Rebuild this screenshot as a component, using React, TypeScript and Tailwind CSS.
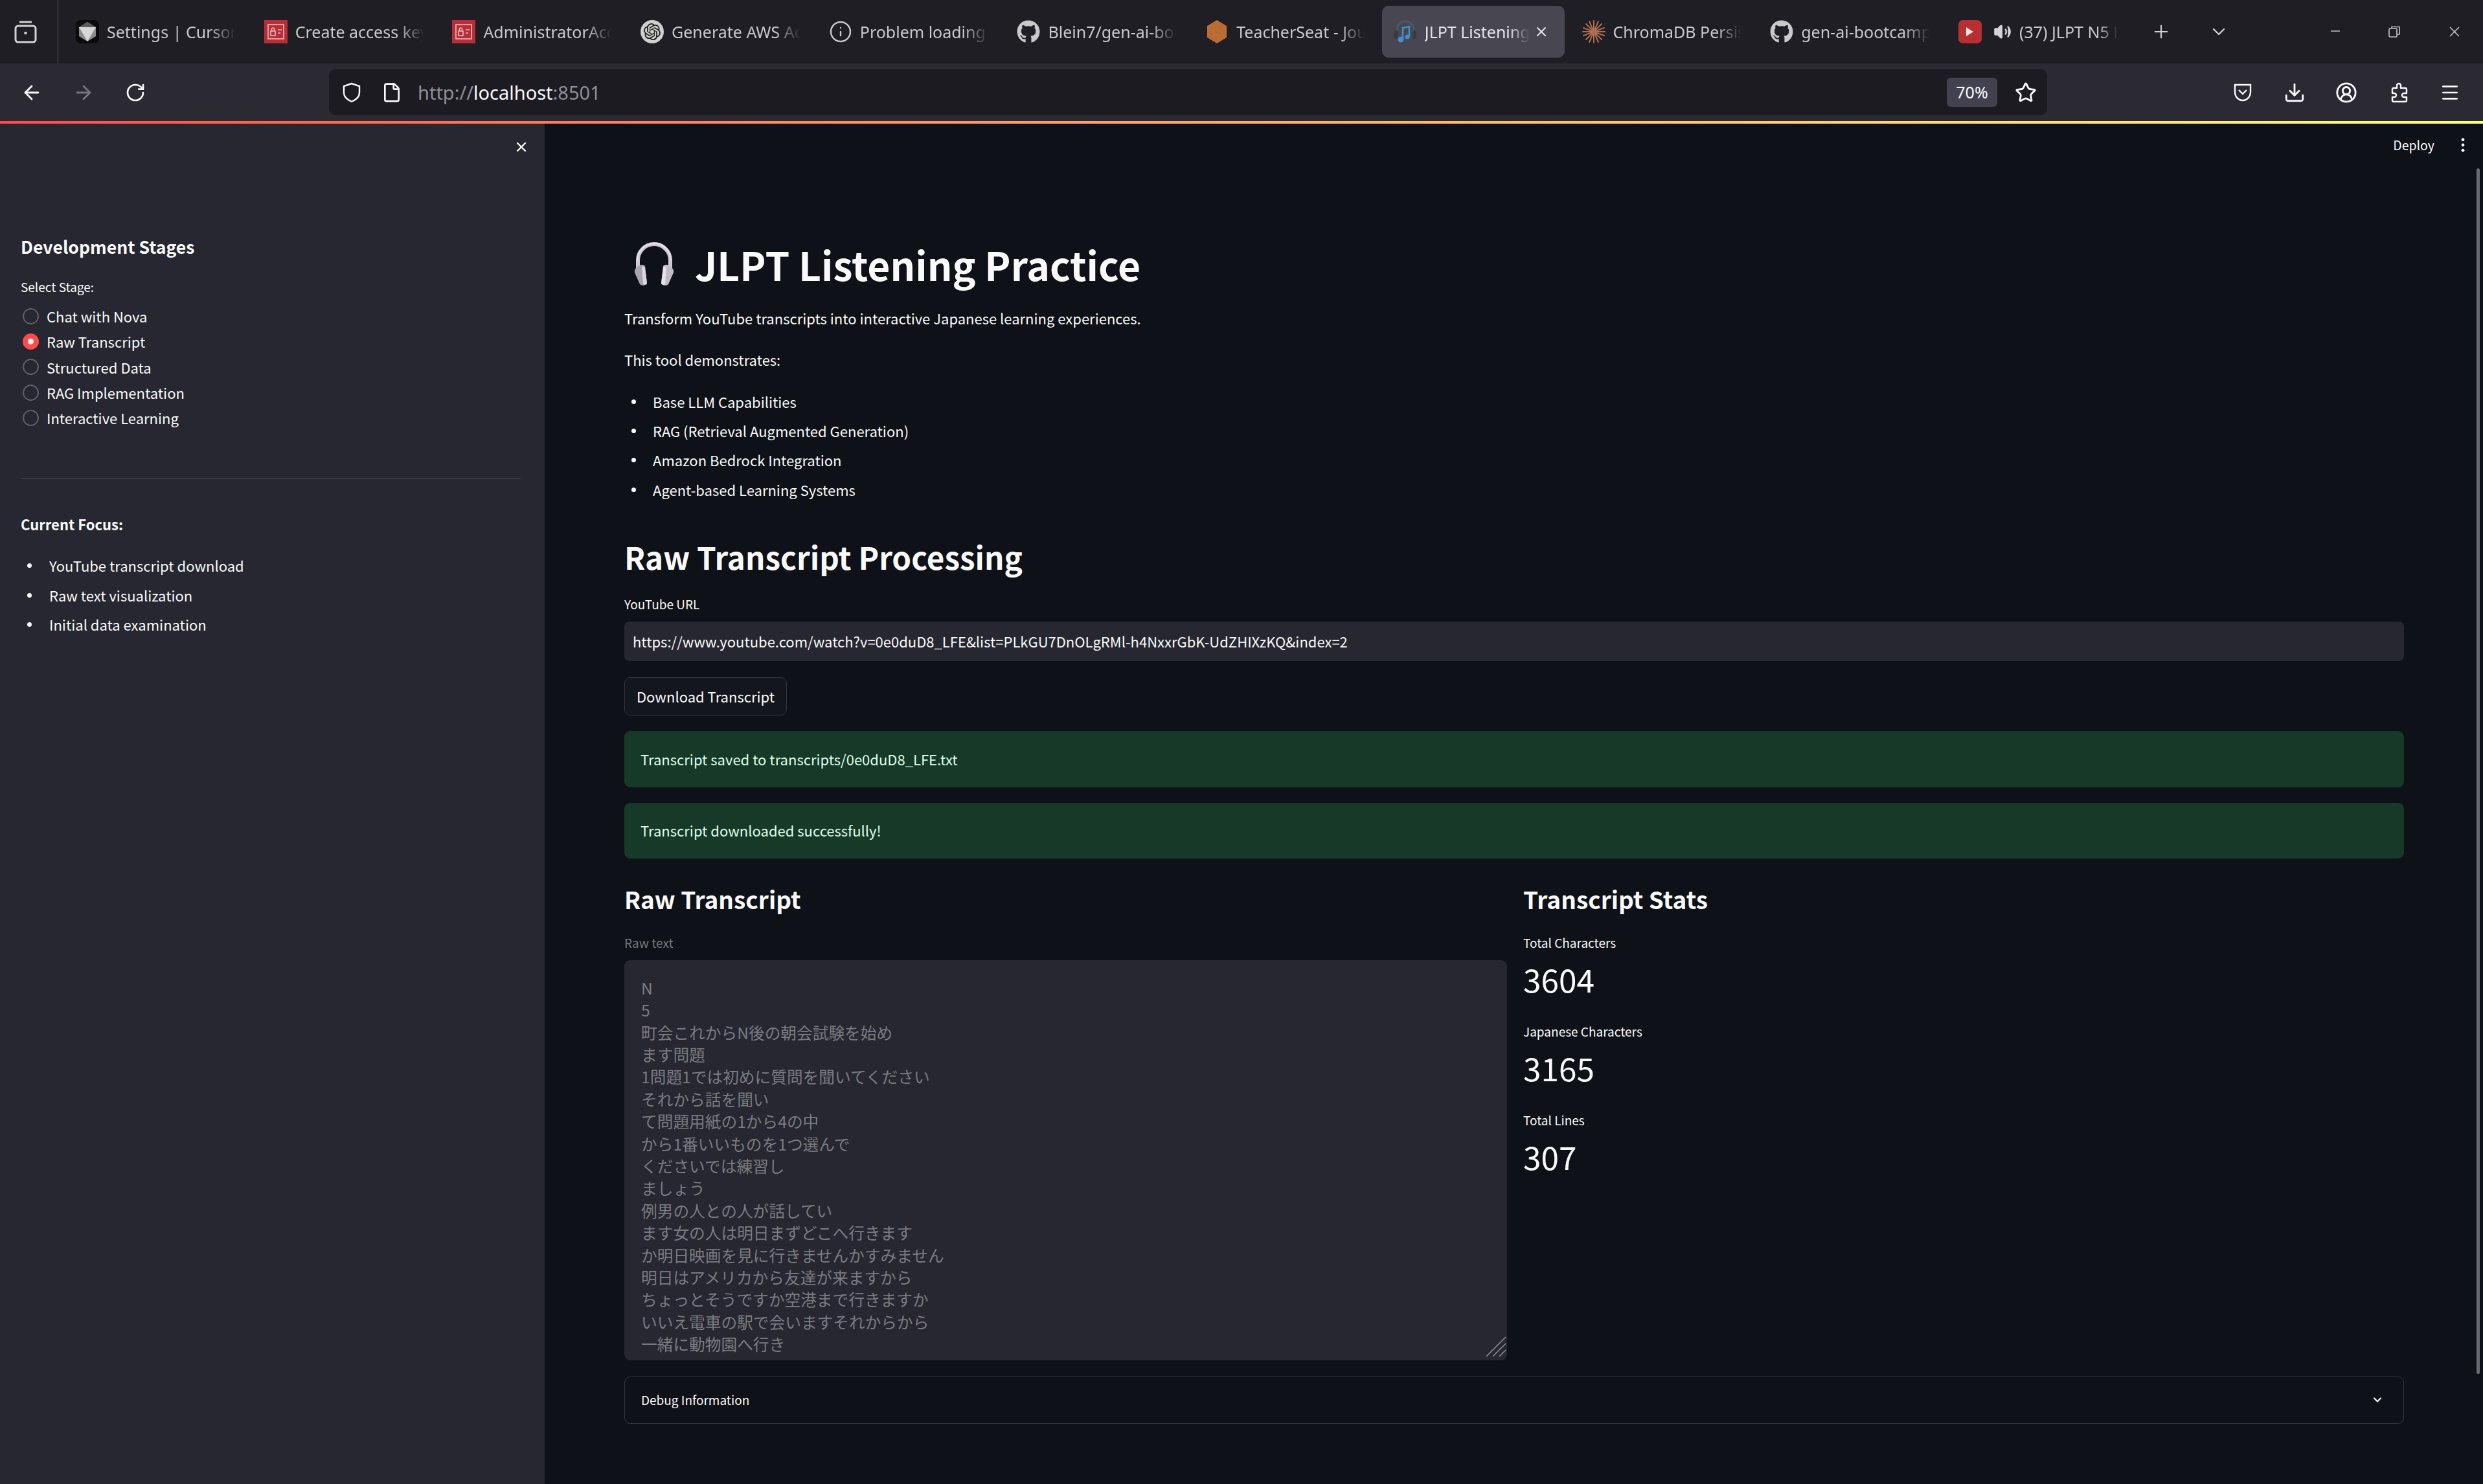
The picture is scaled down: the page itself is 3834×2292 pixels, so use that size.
import React from "react";
import { ArrowLeft, ArrowRight, ChevronDown, CircleUserRound, Download, File, Info, Menu, Minus, Plus, RotateCw, Star, Volume2, X } from "lucide-react";
import { FaGithub } from "react-icons/fa";
import { SiOpenai } from "react-icons/si";

const Iam = () => (
  <svg viewBox="0 0 36 36" className="w-[36px] h-[36px]">
    <rect width="36" height="36" fill="#b72e38" />
    <rect x="6" y="7" width="24" height="22" fill="none" stroke="#e8b9bc" strokeWidth="1.6" />
    <rect x="10" y="17" width="7" height="7" fill="none" stroke="#e8b9bc" strokeWidth="1.6" />
    <path d="M11.5 17v-3a2 2 0 0 1 4 0v3M21 15h6M21 20h4" fill="none" stroke="#e8b9bc" strokeWidth="1.6" />
  </svg>
);
const CursorIcon = () => (
  <svg viewBox="0 0 36 36" className="w-[36px] h-[36px]">
    <rect width="36" height="36" rx="8" fill="#0b0b0b" />
    <path d="M18 3 31 11v14L18 33 5 25V11z" fill="#8a8a8a" />
    <path d="M5 11h26L18 33z" fill="#d6d6d6" />
    <path d="M18 3 31 11H5z" fill="#5c5c5c" />
  </svg>
);
const OpenAi = () => (
  <div className="w-[36px] h-[36px] rounded-full bg-[#cfcfcf] flex items-center justify-center">
    <SiOpenai className="w-[26px] h-[26px] text-[#1b1b1d]" />
  </div>
);
const Hex = () => (
  <svg viewBox="0 0 36 36" className="w-[36px] h-[36px]">
    <path d="M18 0 33 9v18L18 36 3 27V9z" fill="#b96d35" />
  </svg>
);
const Music = () => (
  <svg viewBox="0 0 36 36" className="w-[36px] h-[36px]">
    <path d="M5 20V15a13 13 0 0 1 26 0v5" fill="none" stroke="#4c5a62" strokeWidth="2.5" />
    <rect x="1" y="16" width="6" height="13" rx="2" fill="#3a3a40" />
    <rect x="29" y="16" width="6" height="13" rx="2" fill="#3a3a40" />
    <path d="M14 30V12l10-2v16" fill="none" stroke="#3f8fd0" strokeWidth="2.5" />
    <circle cx="11" cy="30" r="4.5" fill="#3f8fd0" />
    <circle cx="21" cy="26" r="3.5" fill="#3f8fd0" />
  </svg>
);
const Burst = () => (
  <svg viewBox="0 0 36 36" className="w-[36px] h-[36px]" stroke="#b06d50" strokeWidth="2" strokeLinecap="round">
    <path d="M18 1v34M1 18h34M6 6l24 24M30 6 6 30M11 2l14 32M25 2 11 34M2 12l32 12M34 12 2 24" />
  </svg>
);
const Yt = () => (
  <div className="w-[36px] h-[36px] rounded-[7px] bg-[#b72f30] flex items-center justify-center">
    <div className="w-0 h-0 border-y-[7px] border-y-transparent border-l-[11px] border-l-[#e9e4e4]" />
  </div>
);
const Gh = () => <FaGithub className="w-[36px] h-[36px] text-[#c9c9cb]" />;
const InfoI = () => <Info className="w-[36px] h-[36px] text-[#c9c9cb]" strokeWidth={1.6} />;

const tabs: { label: string; icon: React.ReactNode; active?: boolean; audio?: boolean }[] = [
  { label: "Settings | Cursor", icon: <CursorIcon /> },
  { label: "Create access key", icon: <Iam /> },
  { label: "AdministratorAccess", icon: <Iam /> },
  { label: "Generate AWS Access", icon: <OpenAi /> },
  { label: "Problem loading page", icon: <InfoI /> },
  { label: "Blein7/gen-ai-bootcamp", icon: <Gh /> },
  { label: "TeacherSeat - Journal", icon: <Hex /> },
  { label: "JLPT Listening Practice", icon: <Music />, active: true },
  { label: "ChromaDB Persistence", icon: <Burst /> },
  { label: "gen-ai-bootcamp-2025", icon: <Gh /> },
  { label: "(37) JLPT N5 Listening", icon: <Yt />, audio: true },
];

const transcript = [
  "N",
  "5",
  "町会これからN後の朝会試験を始め",
  "ます問題",
  "1問題1では初めに質問を聞いてください",
  "それから話を聞い",
  "て問題用紙の1から4の中",
  "から1番いいものを1つ選んで",
  "くださいでは練習し",
  "ましょう",
  "例男の人との人が話してい",
  "ます女の人は明日まずどこへ行きます",
  "か明日映画を見に行きませんかすみません",
  "明日はアメリカから友達が来ますから",
  "ちょっとそうですか空港まで行きますか",
  "いいえ電車の駅で会いますそれからから",
  "一緒に動物園へ行き",
];

const Tab = ({ t }: { t: (typeof tabs)[number] }) => (
  <div className="w-[290.7px] h-[98px] shrink-0 pl-[10px] py-[9px]">
    <div className={`h-[80px] flex items-center rounded-[10px] pl-[18px] ${t.active ? "bg-[#484751] w-[282px] pr-[24px]" : "w-[280px] pr-[15px]"}`}>
      <div className="w-[36px] h-[36px] shrink-0">{t.icon}</div>
      {t.audio && <Volume2 className="w-[28px] h-[28px] ml-[18px] shrink-0 text-[#d4d4d6]" fill="#d4d4d6" />}
      <div
        className={`ml-[12px] flex-1 min-w-0 overflow-hidden whitespace-nowrap text-[25px] leading-[34px] [mask-image:linear-gradient(to_right,black_80%,transparent)] ${t.active ? "text-[#e4e4e8]" : "text-[#c9c9cc]"}`}
      >
        {t.label}
      </div>
      {t.active && <X className="w-[24px] h-[24px] ml-[6px] shrink-0 text-[#e8e8ea]" strokeWidth={2} />}
    </div>
  </div>
);

const Radio = ({ label, checked }: { label: string; checked?: boolean }) => (
  <div className="h-[39.3px] flex items-center">
    {checked ? (
      <div className="ml-[3px] w-[25px] h-[25px] rounded-full bg-[#ff4b4b] flex items-center justify-center">
        <div className="w-[9px] h-[9px] rounded-full bg-[#f4f4f4]" />
      </div>
    ) : (
      <div className="ml-[3px] w-[25px] h-[25px] rounded-full border-[2px] border-[#5e5f68]" />
    )}
    <span className="ml-[12px] text-[22px] leading-[34px] text-[#fafafa]">{label}</span>
  </div>
);

const Bullet = ({ children, h, textPad }: { children: React.ReactNode; h: string; textPad: string }) => (
  <div className={`${h} flex items-center text-[22px] text-[#fafafa]`}>
    <div className="w-[7px] h-[7px] rounded-full bg-[#fafafa] shrink-0" />
    <span className={textPad}>{children}</span>
  </div>
);

const Stat = ({ label, value, first }: { label: string; value: string; first?: boolean }) => (
  <>
    <div className={`h-[30px] flex items-center text-[19px] text-[#fafafa] ${first ? "mt-[28px]" : "mt-[37px]"}`}>{label}</div>
    <div className="h-[62px] mt-[8px] flex items-center text-[49.6px] text-[#fafafa]">{value}</div>
  </>
);

export default function App() {
  return (
    <div className="w-[3834px] h-[2292px] overflow-hidden flex flex-col bg-[#0e1117] font-['Noto_Sans_CJK_JP',sans-serif]">
      {/* Browser tab strip */}
      <div className="h-[98px] shrink-0 bg-[#1e1e24] flex items-start font-['Noto_Sans',sans-serif]">
        <svg viewBox="0 0 35 35" className="w-[35px] h-[35px] ml-[22px] mt-[32px] shrink-0" fill="none" stroke="#d2d2d4" strokeWidth="3">
          <rect x="2" y="8" width="31" height="25" rx="4" />
          <path d="M8 2h19" />
          <rect x="15.5" y="17" width="4" height="4" fill="#d2d2d4" stroke="none" />
        </svg>
        <div className="w-px h-[98px] ml-[32px] -mr-px bg-[#55555c] shrink-0" />
        {tabs.map((t) => (
          <Tab key={t.label} t={t} />
        ))}
        <Plus className="w-[32px] h-[32px] ml-[34px] mt-[33px] shrink-0 text-[#d0d0d2]" strokeWidth={1.6} />
        <ChevronDown className="w-[32px] h-[32px] ml-[57px] mt-[33px] shrink-0 text-[#d0d0d2]" strokeWidth={1.8} />
        <Minus className="w-[22px] h-[22px] ml-[153px] mt-[37px] shrink-0 text-[#c4c4c6]" strokeWidth={1.6} />
        <svg viewBox="0 0 20 20" className="w-[20px] h-[20px] ml-[70px] mt-[39px] shrink-0" fill="none" stroke="#c4c4c6" strokeWidth="1.6">
          <rect x="2" y="5" width="12" height="13" rx="1.5" />
          <path d="M6 5V2.5h12V14h-4" />
        </svg>
        <X className="w-[26px] h-[26px] ml-[70px] mt-[36px] shrink-0 text-[#c4c4c6]" strokeWidth={1.5} />
      </div>

      {/* Browser nav bar */}
      <div className="h-[89px] shrink-0 bg-[#2b2a33] flex items-center">
        <ArrowLeft className="w-[34px] h-[34px] ml-[32px] shrink-0 text-[#fbfbfe]" strokeWidth={2} />
        <ArrowRight className="w-[34px] h-[34px] ml-[46px] shrink-0 text-[#77767d]" strokeWidth={2} />
        <RotateCw className="w-[32px] h-[32px] ml-[47px] shrink-0 text-[#fbfbfe]" strokeWidth={2} />
        <div className="ml-[283px] w-[2653px] h-[71px] shrink-0 rounded-[10px] bg-[#1c1b22] flex items-center pl-[19px] pr-[16px]">
          <svg viewBox="0 0 32 32" className="w-[32px] h-[32px] shrink-0" fill="none" stroke="#fbfbfe" strokeWidth="2.4">
            <path d="M16 2 4 6v10c0 7 5 11 12 14 7-3 12-7 12-14V6z" />
          </svg>
          <File className="w-[32px] h-[32px] ml-[30px] shrink-0 text-[#fbfbfe]" strokeWidth={2} />
          <div className="ml-[24px] text-[29px] font-['Noto_Sans',sans-serif] text-[#8f8f96]">
            http://<span className="text-[#fbfbfe]">localhost</span>:8501
          </div>
          <div className="ml-auto w-[78px] h-[45px] rounded-[6px] bg-[#42414d] flex items-center justify-center text-[25px] font-['Noto_Sans',sans-serif] text-[#fbfbfe]">70%</div>
          <Star className="w-[34px] h-[34px] ml-[27px] shrink-0 text-[#fbfbfe]" strokeWidth={2} />
        </div>
        <svg viewBox="0 0 32 32" className="w-[32px] h-[32px] ml-[286px] shrink-0" fill="none" stroke="#fbfbfe" strokeWidth="2.4">
          <path d="M4 4h24v11c0 7-5 13-12 13S4 22 4 15z" />
          <path d="m10 12 6 6 6-6" />
        </svg>
        <Download className="w-[34px] h-[34px] ml-[47px] shrink-0 text-[#fbfbfe]" strokeWidth={2} />
        <CircleUserRound className="w-[34px] h-[34px] ml-[46px] shrink-0 text-[#fbfbfe]" strokeWidth={2} />
        <svg viewBox="0 0 32 32" className="w-[32px] h-[34px] ml-[48px] shrink-0" fill="none" stroke="#fbfbfe" strokeWidth="2.4" strokeLinejoin="round">
          <path d="M13 9V5a3 3 0 0 1 6 0v4h7a2 2 0 0 1 2 2v6h-4a3 3 0 0 0 0 6h4v5a2 2 0 0 1-2 2H8a2 2 0 0 1-2-2v-5h3a3 3 0 0 0 0-6H6v-6a2 2 0 0 1 2-2z" />
        </svg>
        <Menu className="w-[32px] h-[32px] ml-[47px] shrink-0 text-[#fbfbfe]" strokeWidth={2} />
      </div>

      {/* Streamlit decoration */}
      <div className="h-[4px] shrink-0 bg-gradient-to-r from-[#ff4b4b] to-[#fffd80]" />

      <div className="flex-1 min-h-0 flex relative">
        {/* Sidebar */}
        <aside className="w-[841px] shrink-0 bg-[#262730] pl-[32px] pr-[37px]">
          <div className="h-[72px] flex items-center justify-end -mr-[13px]">
            <X className="w-[24px] h-[24px] text-[#fafafa]" strokeWidth={2.4} />
          </div>
          <div className="h-[40px] mt-[98px] flex items-center text-[26.6px] font-semibold text-[#fafafa]">Development Stages</div>
          <div className="h-[30px] mt-[27px] flex items-center text-[19px] text-[#fafafa]">Select Stage:</div>
          <div className="mt-[10.5px]">
            <Radio label="Chat with Nova" />
            <Radio label="Raw Transcript" checked />
            <Radio label="Structured Data" />
            <Radio label="RAG Implementation" />
            <Radio label="Interactive Learning" />
          </div>
          <div className="h-px mt-[74px] bg-[#4a4b55]" />
          <div className="h-[34px] mt-[53px] flex items-center text-[22px] font-semibold text-[#fafafa]">Current Focus:</div>
          <div className="mt-[24px] pl-[10px]">
            <Bullet h="h-[45.5px]" textPad="ml-[27px]">YouTube transcript download</Bullet>
            <Bullet h="h-[45.5px]" textPad="ml-[27px]">Raw text visualization</Bullet>
            <Bullet h="h-[45.5px]" textPad="ml-[27px]">Initial data examination</Bullet>
          </div>
        </aside>

        {/* Main */}
        <main className="flex-1 min-w-0 pl-[123px] pr-[122px]">
          <div className="h-[66px] -mr-[122px] pr-[28px] flex items-center justify-end text-[19.5px] text-[#fafafa]">
            <span>Deploy</span>
            <svg viewBox="0 0 6 24" className="w-[6px] h-[22px] ml-[41px]" fill="#fafafa">
              <circle cx="3" cy="3" r="2.6" />
              <circle cx="3" cy="12" r="2.6" />
              <circle cx="3" cy="21" r="2.6" />
            </svg>
          </div>
          <div className="h-[90px] mt-[106px] flex items-center">
            <svg viewBox="0 0 64 68" className="w-[64px] h-[68px] ml-[14px] shrink-0">
              <path d="M7 40V28a25 25 0 0 1 50 0v12" fill="none" stroke="#cfc9d2" strokeWidth="6" />
              <path d="M6 28a26 26 0 0 1 52 0" fill="none" stroke="#e9e5ea" strokeWidth="2" />
              <path d="M8 37c3-3 8-3 10 0l3 26c0 4-8 5-11 2L2 47c-1-4 2-8 6-10z" fill="#a9a3ad" />
              <path d="M13 38c3-1 5 0 5 2l3 23c0 3-5 4-6 1z" fill="#dcd7de" />
              <path d="M56 37c-3-3-8-3-10 0l-3 26c0 4 8 5 11 2l8-18c1-4-2-8-6-10z" fill="#c2bcc6" />
              <path d="M46 40c0-2 2-3 5-2l-2 26c-1 3-6 2-6-1z" fill="#e6e2e8" />
            </svg>
            <h1 className="ml-[31px] text-[60.5px] leading-[90px] font-bold text-[#fafafa] whitespace-nowrap">JLPT Listening Practice</h1>
          </div>
          <p className="h-[34px] mt-[21px] flex items-center text-[22px] text-[#fafafa]">Transform YouTube transcripts into interactive Japanese learning experiences.</p>
          <p className="h-[34px] mt-[30px] flex items-center text-[22px] text-[#fafafa]">This tool demonstrates:</p>
          <div className="mt-[25.5px] pl-[11px]">
            <Bullet h="h-[45.3px]" textPad="ml-[26px]">Base LLM Capabilities</Bullet>
            <Bullet h="h-[45.3px]" textPad="ml-[26px]">RAG (Retrieval Augmented Generation)</Bullet>
            <Bullet h="h-[45.3px]" textPad="ml-[26px]">Amazon Bedrock Integration</Bullet>
            <Bullet h="h-[45.3px]" textPad="ml-[26px]">Agent-based Learning Systems</Bullet>
          </div>
          <h2 className="h-[70px] mt-[46px] flex items-center text-[47.6px] font-semibold text-[#fafafa]">Raw Transcript Processing</h2>
          <div className="h-[30px] mt-[24px] flex items-center text-[19px] text-[#fafafa]">YouTube URL</div>
          <div className="h-[61px] mt-[11px] rounded-[8px] bg-[#262730] flex items-center pl-[13px] text-[22px] text-[#fafafa]">
            https://www.youtube.com/watch?v=0e0duD8_LFE&amp;list=PLkGU7DnOLgRMl-h4NxxrGbK-UdZHIXzKQ&amp;index=2
          </div>
          <button className="h-[59px] mt-[25px] w-[251px] rounded-[9px] border border-[#34363f] bg-[#13161d] flex items-center justify-center text-[22px] text-[#fafafa]">
            Download Transcript
          </button>
          <div className="h-[87px] mt-[24px] rounded-[9px] bg-[#173928] flex items-center pl-[25px] text-[22px] text-[#dffde9]">
            Transcript saved to transcripts/0e0duD8_LFE.txt
          </div>
          <div className="h-[86px] mt-[24px] rounded-[9px] bg-[#173928] flex items-center pl-[25px] text-[22px] text-[#dffde9]">
            Transcript downloaded successfully!
          </div>

          <div className="mt-[38px] grid grid-cols-[1363px_1fr] gap-x-[25px]">
            <div>
              <h3 className="h-[50px] flex items-center text-[37px] font-semibold text-[#fafafa]">Raw Transcript</h3>
              <div className="h-[30px] mt-[28px] flex items-center text-[19px] text-[#76777c]">Raw text</div>
              <div className="relative h-[618px] mt-[11px] rounded-[9px] bg-[#262730] overflow-hidden pt-[25px] pl-[26px] text-[24.7px] leading-[34.4px] text-[#7a7b82]">
                {transcript.map((line, i) => (
                  <div key={i}>{line}</div>
                ))}
                <svg viewBox="0 0 32 32" className="absolute right-[1px] bottom-[5px] w-[32px] h-[32px]" stroke="#8d8d92" strokeWidth="1.6">
                  <path d="M1 31 31 1M11 31 31 11M21 31 31 21" />
                </svg>
              </div>
            </div>
            <div>
              <h3 className="h-[50px] flex items-center text-[37px] font-semibold text-[#fafafa]">Transcript Stats</h3>
              <Stat first label="Total Characters" value="3604" />
              <Stat label="Japanese Characters" value="3165" />
              <Stat label="Total Lines" value="307" />
            </div>
          </div>

          <div className="h-[73px] mt-[25px] rounded-[9px] border border-[#33353c] flex items-center pl-[25px] pr-[30px] text-[19px] text-[#fafafa]">
            <span>Debug Information</span>
            <ChevronDown className="w-[20px] h-[20px] ml-auto text-[#fafafa]" strokeWidth={2.6} />
          </div>
        </main>

        {/* Overlay scrollbar of the page */}
        <div className="absolute right-[5px] top-[69px] w-[5px] h-[1862px] rounded-full bg-[#6b6c70]" />
      </div>
    </div>
  );
}
